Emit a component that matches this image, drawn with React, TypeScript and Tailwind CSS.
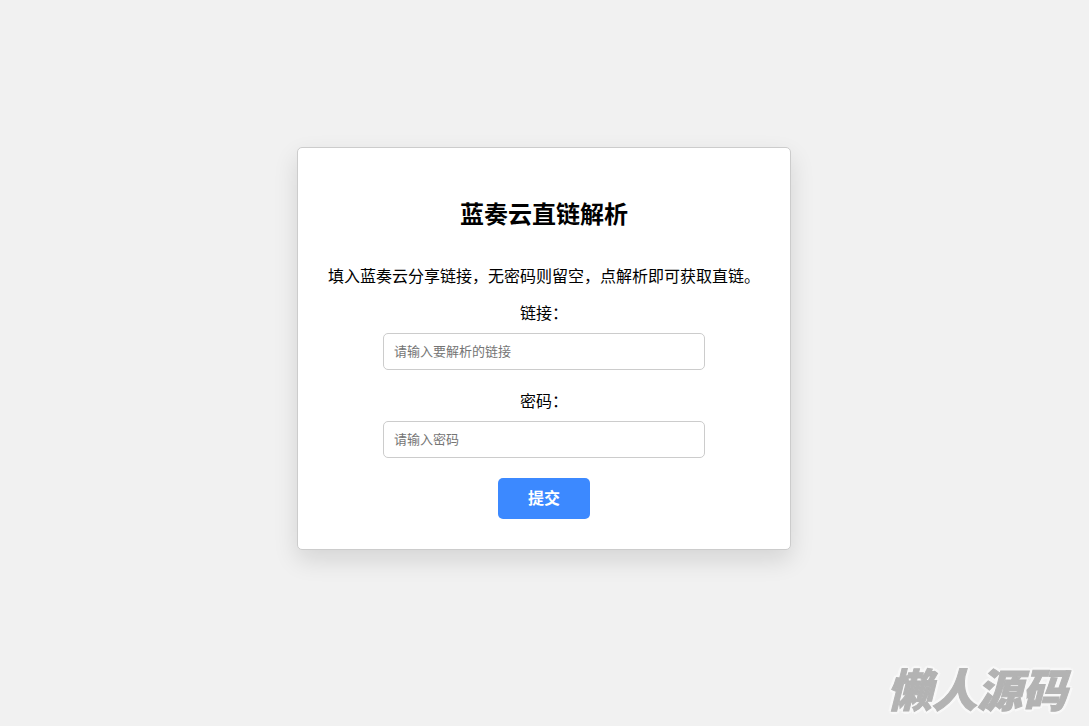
import { useState } from 'react';
import type { FormEvent } from 'react';

interface FieldProps {
  id: string;
  label: string;
  placeholder: string;
  value: string;
  onChange: (value: string) => void;
}

function Field({ id, label, placeholder, value, onChange }: FieldProps) {
  return (
    <div className="flex w-full flex-col items-center">
      <label htmlFor={id} className="mb-[7px] text-base leading-6">
        {label}
      </label>
      <input
        id={id}
        type="text"
        placeholder={placeholder}
        value={value}
        onChange={(e) => onChange(e.target.value)}
        className="mb-5 w-full max-w-[322px] rounded-[5px] border border-[#ccc] bg-white p-2.5 text-[13px] leading-[15px] placeholder:text-[#757575]"
      />
    </div>
  );
}

export default function App() {
  const [link, setLink] = useState('');
  const [password, setPassword] = useState('');

  const handleSubmit = (e: FormEvent) => {
    e.preventDefault();
  };

  return (
    <div className="flex min-h-screen items-center justify-center bg-[#f1f1f1] pr-px pb-[29px] font-['Liberation_Sans','Noto_Sans_CJK_SC',sans-serif] text-black">
      {/* Card */}
      <main className="rounded-[5px] border border-[#ccc] bg-white p-[30px] text-center shadow-[0_10px_25px_rgba(0,0,0,0.12)]">
        <h2 className="mt-5 text-2xl leading-[34px] font-bold">蓝奏云直链解析</h2>
        <p className="mt-[33px] mb-[13px] text-base leading-6">
          填入蓝奏云分享链接，无密码则留空，点解析即可获取直链。
        </p>

        <form onSubmit={handleSubmit} className="flex flex-col items-center">
          <Field
            id="link"
            label="链接："
            placeholder="请输入要解析的链接"
            value={link}
            onChange={setLink}
          />
          <Field
            id="password"
            label="密码："
            placeholder="请输入密码"
            value={password}
            onChange={setPassword}
          />
          <button
            type="submit"
            className="cursor-pointer rounded-[5px] bg-[#3c89ff] px-[30px] py-2.5 text-base leading-[21px] font-bold text-white"
          >
            提交
          </button>
        </form>
      </main>

      {/* Watermark */}
      <div className="pointer-events-none fixed right-[22px] bottom-1.5 text-[45px] leading-[56px] font-black text-[#b3b3b3] italic select-none [-webkit-text-stroke:1px_#b3b3b3] [text-shadow:3px_0_#f8f8f8,-3px_0_#f8f8f8,0_3px_#f8f8f8,0_-3px_#f8f8f8,2px_2px_#f8f8f8,-2px_-2px_#f8f8f8,2px_-2px_#f8f8f8,-2px_2px_#f8f8f8]">
        懒人源码
      </div>
    </div>
  );
}
